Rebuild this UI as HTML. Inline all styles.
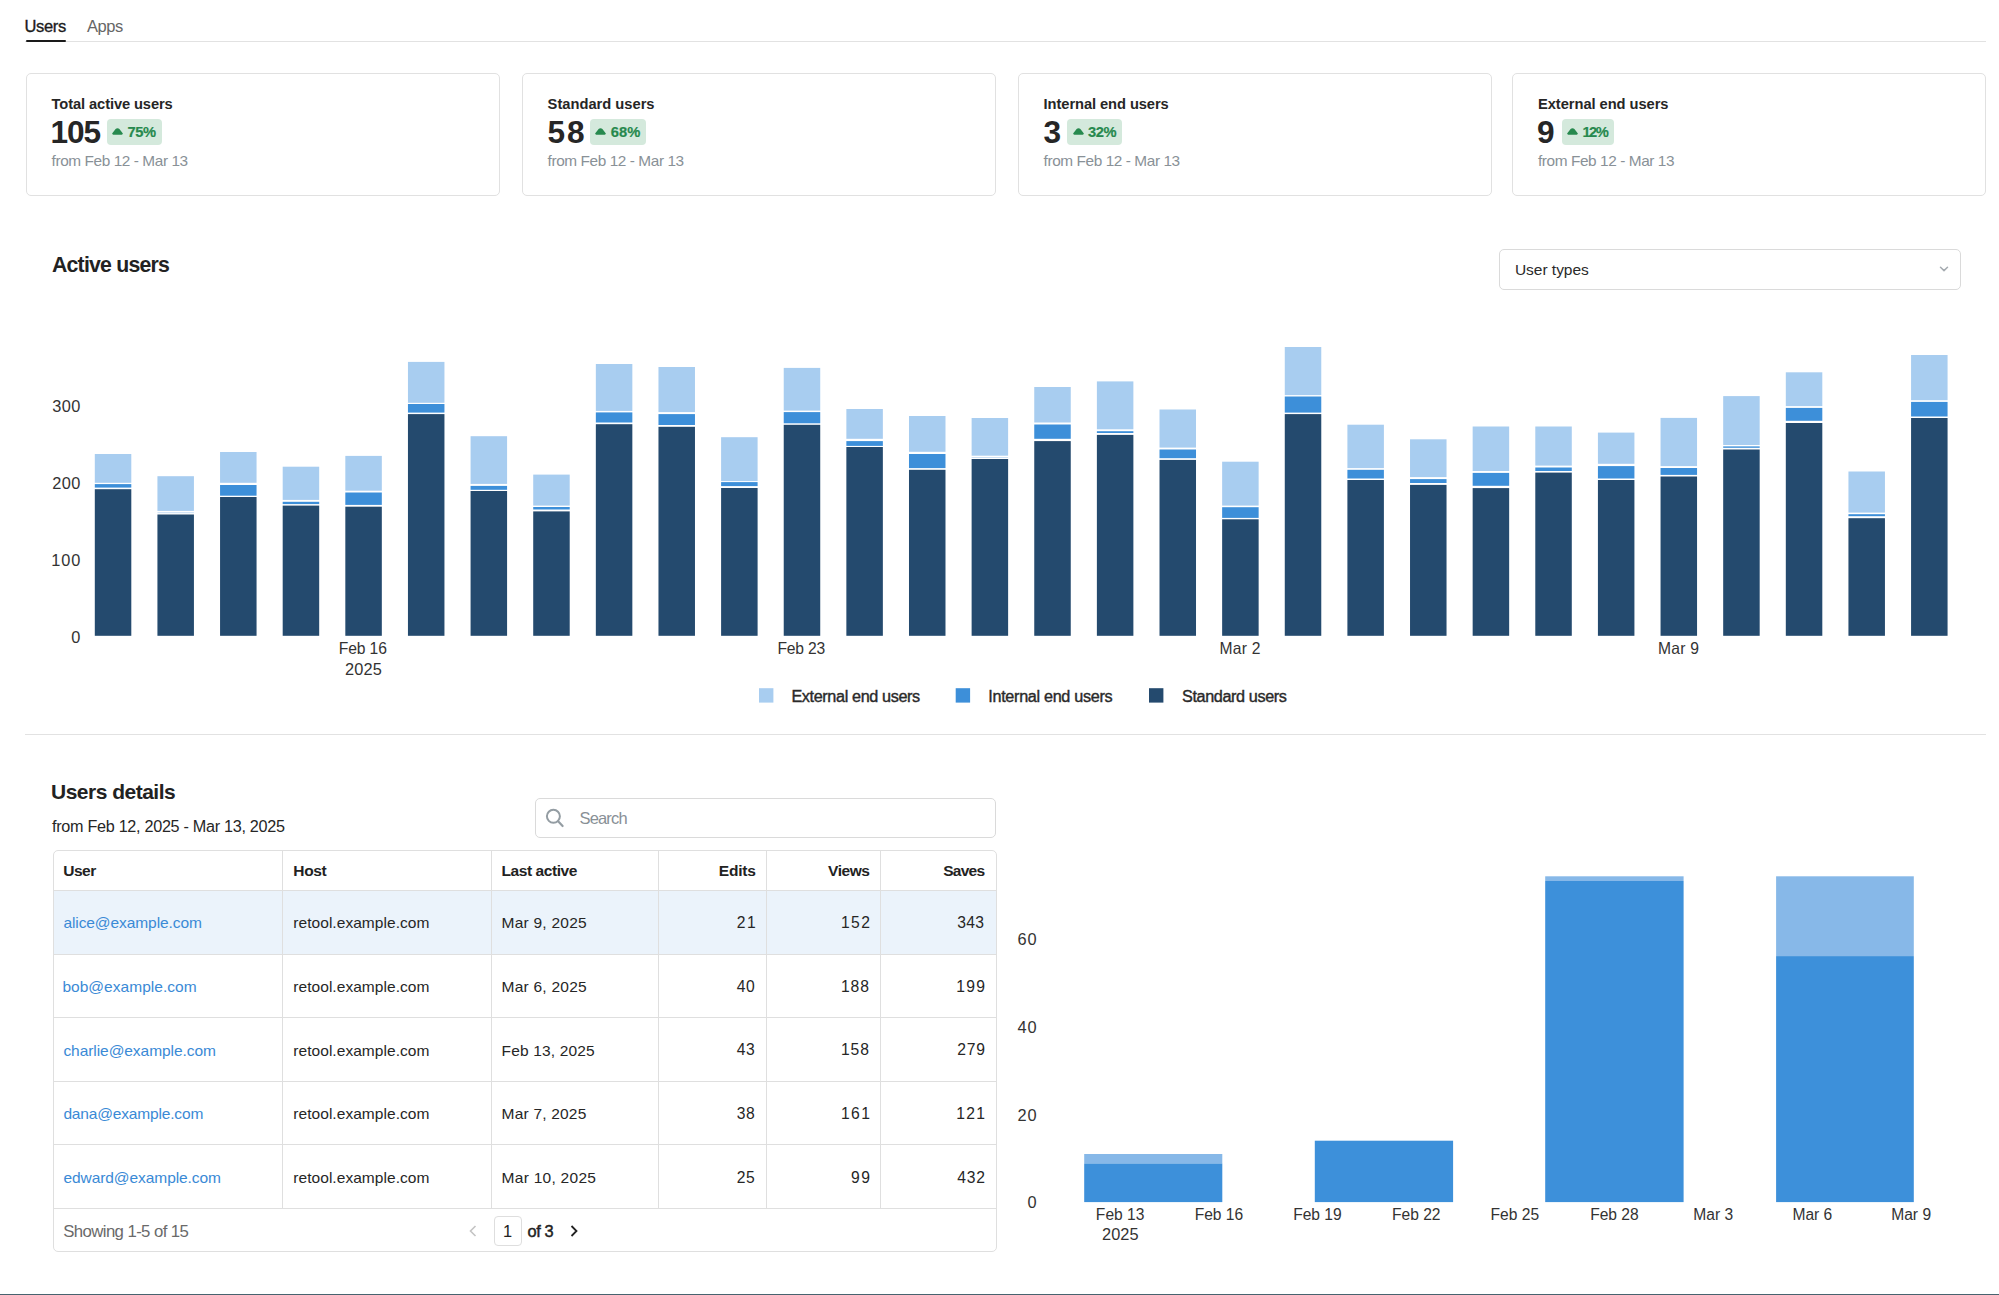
<!DOCTYPE html><html><head><meta charset="utf-8"><style>html,body{margin:0;padding:0;background:#fff;}
body{width:1999px;height:1295px;position:relative;overflow:hidden;font-family:"Liberation Sans", sans-serif;}
.t{position:absolute;line-height:1;white-space:nowrap;}
</style></head><body>
<div class="t" style="left:24.50px;top:18.23px;font-size:16.5px;font-weight:400;color:#1c1c1c;letter-spacing:-0.334px;-webkit-text-stroke:0.35px #1c1c1c;">Users</div>
<div class="t" style="left:87.00px;top:18.23px;font-size:16.5px;font-weight:400;color:#666;letter-spacing:-0.453px;">Apps</div>
<div style="position:absolute;left:25.00px;top:40.50px;width:1961.00px;height:1.10px;background:#e2e2e2"></div>
<div style="position:absolute;left:25.50px;top:39.60px;width:40.50px;height:2.40px;background:#1a1a1a;border-radius:1px"></div>
<div style="position:absolute;left:26.00px;top:72.50px;width:474.00px;height:123.30px;box-sizing:border-box;border:1px solid #e1e1e1;border-radius:5px;background:#fff"></div>
<div class="t" style="left:51.60px;top:96.56px;font-size:14.69px;font-weight:700;color:#262626;letter-spacing:-0.107px;">Total active users</div>
<div class="t" style="left:50.60px;top:117.44px;font-size:31.61px;font-weight:700;color:#262626;letter-spacing:-1.080px;">105</div>
<div style="position:absolute;left:106.60px;top:119.00px;width:55.00px;height:25.50px;background:#d4e9dc;border-radius:4px"></div>
<svg style="position:absolute;left:112.10px;top:127.3px" width="11" height="8" viewBox="0 0 11 8"><path d="M1.3 7.7 C0.2 7.7 -0.1 6.8 0.5 6.1 L3.6 2.1 C4.6 0.8 6.4 0.8 7.4 2.1 L10.5 6.1 C11.1 6.8 10.8 7.7 9.7 7.7 Z" fill="#27894e"/></svg>
<div class="t" style="left:127.40px;top:125.36px;font-size:14.69px;font-weight:700;color:#27894e;letter-spacing:-0.418px;-webkit-text-stroke:0.2px #27894e;">75%</div>
<div class="t" style="left:51.60px;top:153.48px;font-size:15.38px;font-weight:400;color:#899197;letter-spacing:-0.413px;">from Feb 12 - Mar 13</div>
<div style="position:absolute;left:522.00px;top:72.50px;width:474.00px;height:123.30px;box-sizing:border-box;border:1px solid #e1e1e1;border-radius:5px;background:#fff"></div>
<div class="t" style="left:547.60px;top:96.56px;font-size:14.69px;font-weight:700;color:#262626;">Standard users</div>
<div class="t" style="left:547.60px;top:117.44px;font-size:31.61px;font-weight:700;color:#262626;letter-spacing:1.720px;">58</div>
<div style="position:absolute;left:589.90px;top:119.00px;width:56.00px;height:25.50px;background:#d4e9dc;border-radius:4px"></div>
<svg style="position:absolute;left:595.40px;top:127.3px" width="11" height="8" viewBox="0 0 11 8"><path d="M1.3 7.7 C0.2 7.7 -0.1 6.8 0.5 6.1 L3.6 2.1 C4.6 0.8 6.4 0.8 7.4 2.1 L10.5 6.1 C11.1 6.8 10.8 7.7 9.7 7.7 Z" fill="#27894e"/></svg>
<div class="t" style="left:610.70px;top:125.36px;font-size:14.69px;font-weight:700;color:#27894e;letter-spacing:0.082px;-webkit-text-stroke:0.2px #27894e;">68%</div>
<div class="t" style="left:547.60px;top:153.48px;font-size:15.38px;font-weight:400;color:#899197;letter-spacing:-0.413px;">from Feb 12 - Mar 13</div>
<div style="position:absolute;left:1018.00px;top:72.50px;width:474.00px;height:123.30px;box-sizing:border-box;border:1px solid #e1e1e1;border-radius:5px;background:#fff"></div>
<div class="t" style="left:1043.60px;top:96.56px;font-size:14.69px;font-weight:700;color:#262626;letter-spacing:-0.079px;">Internal end users</div>
<div class="t" style="left:1043.60px;top:117.44px;font-size:31.61px;font-weight:700;color:#262626;">3</div>
<div style="position:absolute;left:1067.10px;top:119.00px;width:55.00px;height:25.50px;background:#d4e9dc;border-radius:4px"></div>
<svg style="position:absolute;left:1072.60px;top:127.3px" width="11" height="8" viewBox="0 0 11 8"><path d="M1.3 7.7 C0.2 7.7 -0.1 6.8 0.5 6.1 L3.6 2.1 C4.6 0.8 6.4 0.8 7.4 2.1 L10.5 6.1 C11.1 6.8 10.8 7.7 9.7 7.7 Z" fill="#27894e"/></svg>
<div class="t" style="left:1087.90px;top:125.36px;font-size:14.69px;font-weight:700;color:#27894e;letter-spacing:-0.418px;-webkit-text-stroke:0.2px #27894e;">32%</div>
<div class="t" style="left:1043.60px;top:153.48px;font-size:15.38px;font-weight:400;color:#899197;letter-spacing:-0.413px;">from Feb 12 - Mar 13</div>
<div style="position:absolute;left:1512.40px;top:72.50px;width:474.00px;height:123.30px;box-sizing:border-box;border:1px solid #e1e1e1;border-radius:5px;background:#fff"></div>
<div class="t" style="left:1538.00px;top:96.56px;font-size:14.69px;font-weight:700;color:#262626;letter-spacing:-0.056px;">External end users</div>
<div class="t" style="left:1537.00px;top:117.44px;font-size:31.61px;font-weight:700;color:#262626;">9</div>
<div style="position:absolute;left:1561.60px;top:119.00px;width:52.80px;height:25.50px;background:#d4e9dc;border-radius:4px"></div>
<svg style="position:absolute;left:1567.10px;top:127.3px" width="11" height="8" viewBox="0 0 11 8"><path d="M1.3 7.7 C0.2 7.7 -0.1 6.8 0.5 6.1 L3.6 2.1 C4.6 0.8 6.4 0.8 7.4 2.1 L10.5 6.1 C11.1 6.8 10.8 7.7 9.7 7.7 Z" fill="#27894e"/></svg>
<div class="t" style="left:1582.40px;top:125.36px;font-size:14.69px;font-weight:700;color:#27894e;letter-spacing:-1.518px;-webkit-text-stroke:0.2px #27894e;">12%</div>
<div class="t" style="left:1538.00px;top:153.48px;font-size:15.38px;font-weight:400;color:#899197;letter-spacing:-0.413px;">from Feb 12 - Mar 13</div>
<div class="t" style="left:52.00px;top:254.50px;font-size:21.26px;font-weight:700;color:#222;letter-spacing:-0.779px;">Active users</div>
<div style="position:absolute;left:1499.00px;top:249.00px;width:461.50px;height:40.50px;box-sizing:border-box;border:1px solid #dadada;border-radius:5px;background:#fff"></div>
<div class="t" style="left:1514.90px;top:261.96px;font-size:15.52px;font-weight:400;color:#2a2a2a;letter-spacing:-0.022px;">User types</div>
<svg style="position:absolute;left:1938px;top:265px" width="12" height="8" viewBox="0 0 12 8"><path d="M2.5 2.2 L6 5.6 L9.5 2.2" fill="none" stroke="#a5abb0" stroke-width="1.5" stroke-linecap="round" stroke-linejoin="round"/></svg>
<svg style="position:absolute;left:0;top:0" width="1999" height="1295"><rect x="94.80" y="454" width="36.5" height="28.80" fill="#a8cdf0"/><rect x="94.80" y="484.1" width="36.5" height="3.50" fill="#3d8fd9"/><rect x="94.80" y="489.2" width="36.5" height="146.60" fill="#244a6e"/><rect x="157.43" y="476.2" width="36.5" height="34.70" fill="#a8cdf0"/><rect x="157.43" y="512.2" width="36.5" height="1.00" fill="#c9def3"/><rect x="157.43" y="514.5" width="36.5" height="121.30" fill="#244a6e"/><rect x="220.06" y="452" width="36.5" height="30.80" fill="#a8cdf0"/><rect x="220.06" y="485" width="36.5" height="10.70" fill="#3d8fd9"/><rect x="220.06" y="497" width="36.5" height="138.80" fill="#244a6e"/><rect x="282.69" y="466.7" width="36.5" height="33.20" fill="#a8cdf0"/><rect x="282.69" y="501.8" width="36.5" height="2.30" fill="#3d8fd9"/><rect x="282.69" y="505.6" width="36.5" height="130.20" fill="#244a6e"/><rect x="345.32" y="455.9" width="36.5" height="34.80" fill="#a8cdf0"/><rect x="345.32" y="492.5" width="36.5" height="12.40" fill="#3d8fd9"/><rect x="345.32" y="506.7" width="36.5" height="129.10" fill="#244a6e"/><rect x="407.95" y="361.9" width="36.5" height="40.90" fill="#a8cdf0"/><rect x="407.95" y="404" width="36.5" height="8.60" fill="#3d8fd9"/><rect x="407.95" y="414.1" width="36.5" height="221.70" fill="#244a6e"/><rect x="470.58" y="436.2" width="36.5" height="47.70" fill="#a8cdf0"/><rect x="470.58" y="485.9" width="36.5" height="3.90" fill="#3d8fd9"/><rect x="470.58" y="491" width="36.5" height="144.80" fill="#244a6e"/><rect x="533.21" y="474.6" width="36.5" height="31.00" fill="#a8cdf0"/><rect x="533.21" y="507" width="36.5" height="2.50" fill="#3d8fd9"/><rect x="533.21" y="511.4" width="36.5" height="124.40" fill="#244a6e"/><rect x="595.84" y="364" width="36.5" height="46.90" fill="#a8cdf0"/><rect x="595.84" y="412.4" width="36.5" height="10.10" fill="#3d8fd9"/><rect x="595.84" y="424.2" width="36.5" height="211.60" fill="#244a6e"/><rect x="658.47" y="367" width="36.5" height="45.10" fill="#a8cdf0"/><rect x="658.47" y="414.1" width="36.5" height="10.90" fill="#3d8fd9"/><rect x="658.47" y="426.8" width="36.5" height="209.00" fill="#244a6e"/><rect x="721.10" y="437.2" width="36.5" height="43.90" fill="#a8cdf0"/><rect x="721.10" y="482.1" width="36.5" height="4.00" fill="#3d8fd9"/><rect x="721.10" y="488" width="36.5" height="147.80" fill="#244a6e"/><rect x="783.73" y="367.9" width="36.5" height="42.70" fill="#a8cdf0"/><rect x="783.73" y="412.1" width="36.5" height="11.20" fill="#3d8fd9"/><rect x="783.73" y="424.8" width="36.5" height="211.00" fill="#244a6e"/><rect x="846.36" y="409" width="36.5" height="29.80" fill="#a8cdf0"/><rect x="846.36" y="441.1" width="36.5" height="4.80" fill="#3d8fd9"/><rect x="846.36" y="447" width="36.5" height="188.80" fill="#244a6e"/><rect x="908.99" y="416" width="36.5" height="35.80" fill="#a8cdf0"/><rect x="908.99" y="454" width="36.5" height="14.10" fill="#3d8fd9"/><rect x="908.99" y="469.8" width="36.5" height="166.00" fill="#244a6e"/><rect x="971.62" y="418" width="36.5" height="37.70" fill="#a8cdf0"/><rect x="971.62" y="457.0" width="36.5" height="0.90" fill="#c9def3"/><rect x="971.62" y="459" width="36.5" height="176.80" fill="#244a6e"/><rect x="1034.25" y="387" width="36.5" height="35.50" fill="#a8cdf0"/><rect x="1034.25" y="424.5" width="36.5" height="14.30" fill="#3d8fd9"/><rect x="1034.25" y="441.1" width="36.5" height="194.70" fill="#244a6e"/><rect x="1096.88" y="381.4" width="36.5" height="47.90" fill="#a8cdf0"/><rect x="1096.88" y="431.2" width="36.5" height="1.80" fill="#3d8fd9"/><rect x="1096.88" y="434.9" width="36.5" height="200.90" fill="#244a6e"/><rect x="1159.51" y="409.5" width="36.5" height="38.10" fill="#a8cdf0"/><rect x="1159.51" y="449.5" width="36.5" height="8.70" fill="#3d8fd9"/><rect x="1159.51" y="459.9" width="36.5" height="175.90" fill="#244a6e"/><rect x="1222.14" y="461.7" width="36.5" height="43.90" fill="#a8cdf0"/><rect x="1222.14" y="507.2" width="36.5" height="10.70" fill="#3d8fd9"/><rect x="1222.14" y="519.3" width="36.5" height="116.50" fill="#244a6e"/><rect x="1284.77" y="347" width="36.5" height="48.10" fill="#a8cdf0"/><rect x="1284.77" y="396.5" width="36.5" height="16.10" fill="#3d8fd9"/><rect x="1284.77" y="414.1" width="36.5" height="221.70" fill="#244a6e"/><rect x="1347.40" y="424.7" width="36.5" height="43.40" fill="#a8cdf0"/><rect x="1347.40" y="469.8" width="36.5" height="8.70" fill="#3d8fd9"/><rect x="1347.40" y="480" width="36.5" height="155.80" fill="#244a6e"/><rect x="1410.03" y="439.3" width="36.5" height="37.80" fill="#a8cdf0"/><rect x="1410.03" y="479.1" width="36.5" height="3.90" fill="#3d8fd9"/><rect x="1410.03" y="484.9" width="36.5" height="150.90" fill="#244a6e"/><rect x="1472.66" y="426.5" width="36.5" height="44.50" fill="#a8cdf0"/><rect x="1472.66" y="472.9" width="36.5" height="12.90" fill="#3d8fd9"/><rect x="1472.66" y="488.1" width="36.5" height="147.70" fill="#244a6e"/><rect x="1535.29" y="426.5" width="36.5" height="39.10" fill="#a8cdf0"/><rect x="1535.29" y="467.5" width="36.5" height="3.50" fill="#3d8fd9"/><rect x="1535.29" y="472.6" width="36.5" height="163.20" fill="#244a6e"/><rect x="1597.92" y="432.6" width="36.5" height="31.20" fill="#a8cdf0"/><rect x="1597.92" y="466.1" width="36.5" height="12.40" fill="#3d8fd9"/><rect x="1597.92" y="480" width="36.5" height="155.80" fill="#244a6e"/><rect x="1660.55" y="417.9" width="36.5" height="48.20" fill="#a8cdf0"/><rect x="1660.55" y="468" width="36.5" height="6.90" fill="#3d8fd9"/><rect x="1660.55" y="476.5" width="36.5" height="159.30" fill="#244a6e"/><rect x="1723.18" y="396.1" width="36.5" height="48.90" fill="#a8cdf0"/><rect x="1723.18" y="446.4" width="36.5" height="1.40" fill="#3d8fd9"/><rect x="1723.18" y="449.5" width="36.5" height="186.30" fill="#244a6e"/><rect x="1785.81" y="372.3" width="36.5" height="33.80" fill="#a8cdf0"/><rect x="1785.81" y="407.9" width="36.5" height="12.90" fill="#3d8fd9"/><rect x="1785.81" y="423" width="36.5" height="212.80" fill="#244a6e"/><rect x="1848.44" y="471.5" width="36.5" height="41.10" fill="#a8cdf0"/><rect x="1848.44" y="514.2" width="36.5" height="2.00" fill="#3d8fd9"/><rect x="1848.44" y="518.2" width="36.5" height="117.60" fill="#244a6e"/><rect x="1911.07" y="355" width="36.5" height="45.20" fill="#a8cdf0"/><rect x="1911.07" y="401.9" width="36.5" height="14.60" fill="#3d8fd9"/><rect x="1911.07" y="418" width="36.5" height="217.80" fill="#244a6e"/><rect x="1084.2" y="1154" width="138.10" height="9.50" fill="#87b8e8"/><rect x="1084.2" y="1163.5" width="138.10" height="38.60" fill="#3d90da"/><rect x="1314.8" y="1140.7" width="138.30" height="61.40" fill="#3d90da"/><rect x="1545.2" y="876.3" width="138.40" height="4.70" fill="#87b8e8"/><rect x="1545.2" y="881" width="138.40" height="321.10" fill="#3d90da"/><rect x="1776.1" y="876.3" width="137.70" height="79.80" fill="#87b8e8"/><rect x="1776.1" y="956.1" width="137.70" height="246.00" fill="#3d90da"/><rect x="759" y="688.2" width="14.4" height="14.4" fill="#a8cdf0"/><rect x="955.7" y="688.2" width="14.4" height="14.4" fill="#3d8fd9"/><rect x="1149" y="688.2" width="14.4" height="14.4" fill="#244a6e"/></svg>
<div class="t" style="left:52.20px;top:398.30px;font-size:16.36px;font-weight:400;color:#333;letter-spacing:0.402px;">300</div>
<div class="t" style="left:52.20px;top:475.40px;font-size:16.36px;font-weight:400;color:#333;letter-spacing:0.402px;">200</div>
<div class="t" style="left:51.20px;top:552.00px;font-size:16.36px;font-weight:400;color:#333;letter-spacing:0.902px;">100</div>
<div class="t" style="left:71.20px;top:628.60px;font-size:16.36px;font-weight:400;color:#333;">0</div>
<div class="t" style="left:338.85px;top:641.14px;font-size:15.66px;font-weight:400;color:#333;letter-spacing:-0.147px;">Feb 16</div>
<div class="t" style="left:777.45px;top:641.14px;font-size:15.66px;font-weight:400;color:#333;letter-spacing:-0.187px;">Feb 23</div>
<div class="t" style="left:1219.60px;top:641.14px;font-size:15.66px;font-weight:400;color:#333;letter-spacing:0.222px;">Mar 2</div>
<div class="t" style="left:1658.00px;top:641.14px;font-size:15.66px;font-weight:400;color:#333;letter-spacing:0.222px;">Mar 9</div>
<div class="t" style="left:345.05px;top:660.75px;font-size:16.36px;font-weight:400;color:#333;letter-spacing:0.135px;">2025</div>
<div class="t" style="left:791.40px;top:688.47px;font-size:16.22px;font-weight:400;color:#2a2a2a;letter-spacing:-0.370px;-webkit-text-stroke:0.4px #2a2a2a;">External end users</div>
<div class="t" style="left:988.30px;top:688.47px;font-size:16.22px;font-weight:400;color:#2a2a2a;letter-spacing:-0.318px;-webkit-text-stroke:0.4px #2a2a2a;">Internal end users</div>
<div class="t" style="left:1182.00px;top:688.47px;font-size:16.22px;font-weight:400;color:#2a2a2a;letter-spacing:-0.383px;-webkit-text-stroke:0.4px #2a2a2a;">Standard users</div>
<div style="position:absolute;left:25.00px;top:734.00px;width:1961.00px;height:1.10px;background:#e2e2e2"></div>
<div class="t" style="left:51.00px;top:780.99px;font-size:20.98px;font-weight:700;color:#222;letter-spacing:-0.490px;">Users details</div>
<div class="t" style="left:52.00px;top:818.27px;font-size:16.22px;font-weight:400;color:#262626;letter-spacing:-0.299px;">from Feb 12, 2025 - Mar 13, 2025</div>
<div style="position:absolute;left:535.20px;top:797.60px;width:461.00px;height:40.50px;box-sizing:border-box;border:1px solid #dadada;border-radius:5px;background:#fff"></div>
<svg style="position:absolute;left:545px;top:807.6px" width="20" height="20" viewBox="0 0 20 20"><circle cx="8.4" cy="8.3" r="6.5" fill="none" stroke="#949da3" stroke-width="2"/><path d="M13.1 13.3 L17.6 18" stroke="#949da3" stroke-width="2.2" stroke-linecap="round"/></svg>
<div class="t" style="left:579.60px;top:810.13px;font-size:16.5px;font-weight:400;color:#889096;letter-spacing:-0.861px;">Search</div>
<div style="position:absolute;left:52.50px;top:849.50px;width:944.10px;height:402.50px;box-sizing:border-box;border:1px solid #dfdfdf;border-radius:5px;background:#fff"></div>
<div style="position:absolute;left:53.50px;top:890.30px;width:942.10px;height:63.70px;background:#ebf3fb"></div>
<div style="position:absolute;left:52.50px;top:889.80px;width:944.10px;height:1.00px;background:#dfdfdf"></div>
<div style="position:absolute;left:52.50px;top:953.50px;width:944.10px;height:1.00px;background:#dfdfdf"></div>
<div style="position:absolute;left:52.50px;top:1016.90px;width:944.10px;height:1.00px;background:#dfdfdf"></div>
<div style="position:absolute;left:52.50px;top:1080.50px;width:944.10px;height:1.00px;background:#dfdfdf"></div>
<div style="position:absolute;left:52.50px;top:1144.00px;width:944.10px;height:1.00px;background:#dfdfdf"></div>
<div style="position:absolute;left:52.50px;top:1208.30px;width:944.10px;height:1.00px;background:#dfdfdf"></div>
<div style="position:absolute;left:282.00px;top:849.50px;width:1.00px;height:359.30px;background:#dfdfdf"></div>
<div style="position:absolute;left:490.80px;top:849.50px;width:1.00px;height:359.30px;background:#dfdfdf"></div>
<div style="position:absolute;left:657.90px;top:849.50px;width:1.00px;height:359.30px;background:#dfdfdf"></div>
<div style="position:absolute;left:765.80px;top:849.50px;width:1.00px;height:359.30px;background:#dfdfdf"></div>
<div style="position:absolute;left:880.00px;top:849.50px;width:1.00px;height:359.30px;background:#dfdfdf"></div>
<div class="t" style="left:63.20px;top:863.46px;font-size:15.52px;font-weight:700;color:#222;letter-spacing:-0.488px;">User</div>
<div class="t" style="left:293.30px;top:863.46px;font-size:15.52px;font-weight:700;color:#222;letter-spacing:-0.371px;">Host</div>
<div class="t" style="left:501.50px;top:863.46px;font-size:15.52px;font-weight:700;color:#222;letter-spacing:-0.438px;">Last active</div>
<div class="t" style="left:718.80px;top:863.46px;font-size:15.52px;font-weight:700;color:#222;letter-spacing:-0.201px;">Edits</div>
<div class="t" style="left:828.10px;top:863.46px;font-size:15.52px;font-weight:700;color:#222;letter-spacing:-0.469px;">Views</div>
<div class="t" style="left:943.20px;top:863.46px;font-size:15.52px;font-weight:700;color:#222;letter-spacing:-0.759px;">Saves</div>
<div class="t" style="left:63.40px;top:915.36px;font-size:15.52px;font-weight:400;color:#3a8ad6;letter-spacing:-0.088px;">alice@example.com</div>
<div class="t" style="left:293.30px;top:915.36px;font-size:15.52px;font-weight:400;color:#262626;letter-spacing:0.043px;">retool.example.com</div>
<div class="t" style="left:501.60px;top:915.36px;font-size:15.52px;font-weight:400;color:#262626;letter-spacing:0.223px;">Mar 9, 2025</div>
<div class="t" style="left:736.70px;top:915.24px;font-size:15.66px;font-weight:400;color:#262626;letter-spacing:1.593px;">21</div>
<div class="t" style="left:840.90px;top:915.24px;font-size:15.66px;font-weight:400;color:#262626;letter-spacing:1.443px;">152</div>
<div class="t" style="left:957.20px;top:915.24px;font-size:15.66px;font-weight:400;color:#262626;letter-spacing:0.293px;">343</div>
<div class="t" style="left:62.40px;top:978.98px;font-size:15.52px;font-weight:400;color:#3a8ad6;letter-spacing:0.023px;">bob@example.com</div>
<div class="t" style="left:293.30px;top:978.98px;font-size:15.52px;font-weight:400;color:#262626;letter-spacing:0.043px;">retool.example.com</div>
<div class="t" style="left:501.60px;top:978.98px;font-size:15.52px;font-weight:400;color:#262626;letter-spacing:0.223px;">Mar 6, 2025</div>
<div class="t" style="left:736.70px;top:978.86px;font-size:15.66px;font-weight:400;color:#262626;letter-spacing:0.593px;">40</div>
<div class="t" style="left:840.90px;top:978.86px;font-size:15.66px;font-weight:400;color:#262626;letter-spacing:0.943px;">188</div>
<div class="t" style="left:956.20px;top:978.86px;font-size:15.66px;font-weight:400;color:#262626;letter-spacing:1.293px;">199</div>
<div class="t" style="left:63.40px;top:1042.60px;font-size:15.52px;font-weight:400;color:#3a8ad6;letter-spacing:-0.067px;">charlie@example.com</div>
<div class="t" style="left:293.30px;top:1042.60px;font-size:15.52px;font-weight:400;color:#262626;letter-spacing:0.043px;">retool.example.com</div>
<div class="t" style="left:501.60px;top:1042.60px;font-size:15.52px;font-weight:400;color:#262626;letter-spacing:0.153px;">Feb 13, 2025</div>
<div class="t" style="left:736.70px;top:1042.48px;font-size:15.66px;font-weight:400;color:#262626;letter-spacing:0.593px;">43</div>
<div class="t" style="left:840.90px;top:1042.48px;font-size:15.66px;font-weight:400;color:#262626;letter-spacing:0.943px;">158</div>
<div class="t" style="left:957.20px;top:1042.48px;font-size:15.66px;font-weight:400;color:#262626;letter-spacing:0.793px;">279</div>
<div class="t" style="left:63.40px;top:1106.22px;font-size:15.52px;font-weight:400;color:#3a8ad6;letter-spacing:-0.174px;">dana@example.com</div>
<div class="t" style="left:293.30px;top:1106.22px;font-size:15.52px;font-weight:400;color:#262626;letter-spacing:0.043px;">retool.example.com</div>
<div class="t" style="left:501.60px;top:1106.22px;font-size:15.52px;font-weight:400;color:#262626;letter-spacing:0.193px;">Mar 7, 2025</div>
<div class="t" style="left:736.70px;top:1106.10px;font-size:15.66px;font-weight:400;color:#262626;letter-spacing:0.593px;">38</div>
<div class="t" style="left:840.90px;top:1106.10px;font-size:15.66px;font-weight:400;color:#262626;letter-spacing:1.443px;">161</div>
<div class="t" style="left:956.20px;top:1106.10px;font-size:15.66px;font-weight:400;color:#262626;letter-spacing:1.293px;">121</div>
<div class="t" style="left:63.40px;top:1169.84px;font-size:15.52px;font-weight:400;color:#3a8ad6;letter-spacing:-0.075px;">edward@example.com</div>
<div class="t" style="left:293.30px;top:1169.84px;font-size:15.52px;font-weight:400;color:#262626;letter-spacing:0.043px;">retool.example.com</div>
<div class="t" style="left:501.60px;top:1169.84px;font-size:15.52px;font-weight:400;color:#262626;letter-spacing:0.264px;">Mar 10, 2025</div>
<div class="t" style="left:736.70px;top:1169.72px;font-size:15.66px;font-weight:400;color:#262626;letter-spacing:0.593px;">25</div>
<div class="t" style="left:851.00px;top:1169.72px;font-size:15.66px;font-weight:400;color:#262626;letter-spacing:1.493px;">99</div>
<div class="t" style="left:957.20px;top:1169.72px;font-size:15.66px;font-weight:400;color:#262626;letter-spacing:0.793px;">432</div>
<div class="t" style="left:63.20px;top:1223.90px;font-size:16.78px;font-weight:400;color:#6a6a6a;letter-spacing:-0.595px;">Showing 1-5 of 15</div>
<svg style="position:absolute;left:466px;top:1223px" width="14" height="16" viewBox="0 0 14 16"><path d="M9.5 3 L4.5 8 L9.5 13" fill="none" stroke="#c4c4c4" stroke-width="1.6"/></svg>
<div style="position:absolute;left:494.30px;top:1215.60px;width:27.30px;height:30.40px;box-sizing:border-box;border:1px solid #dedede;border-radius:4px;background:#fff"></div>
<div class="t" style="left:503.00px;top:1223.45px;font-size:16.36px;font-weight:400;color:#222;">1</div>
<div class="t" style="left:527.40px;top:1223.45px;font-size:16.36px;font-weight:400;color:#222;letter-spacing:-0.363px;-webkit-text-stroke:0.45px #222;">of 3</div>
<svg style="position:absolute;left:567px;top:1223px" width="14" height="16" viewBox="0 0 14 16"><path d="M4.5 3 L9.5 8 L4.5 13" fill="none" stroke="#222" stroke-width="1.8"/></svg>
<div class="t" style="left:1017.40px;top:930.70px;font-size:16.36px;font-weight:400;color:#333;letter-spacing:0.902px;">60</div>
<div class="t" style="left:1017.40px;top:1018.70px;font-size:16.36px;font-weight:400;color:#333;letter-spacing:0.902px;">40</div>
<div class="t" style="left:1017.40px;top:1107.00px;font-size:16.36px;font-weight:400;color:#333;letter-spacing:0.902px;">20</div>
<div class="t" style="left:1027.40px;top:1194.10px;font-size:16.36px;font-weight:400;color:#333;">0</div>
<div class="t" style="left:1095.86px;top:1206.69px;font-size:15.6px;font-weight:400;color:#333;">Feb 13</div>
<div class="t" style="left:1194.66px;top:1206.69px;font-size:15.6px;font-weight:400;color:#333;">Feb 16</div>
<div class="t" style="left:1293.16px;top:1206.69px;font-size:15.6px;font-weight:400;color:#333;">Feb 19</div>
<div class="t" style="left:1391.96px;top:1206.69px;font-size:15.6px;font-weight:400;color:#333;">Feb 22</div>
<div class="t" style="left:1490.56px;top:1206.69px;font-size:15.6px;font-weight:400;color:#333;">Feb 25</div>
<div class="t" style="left:1590.16px;top:1206.69px;font-size:15.6px;font-weight:400;color:#333;">Feb 28</div>
<div class="t" style="left:1693.31px;top:1206.69px;font-size:15.6px;font-weight:400;color:#333;">Mar 3</div>
<div class="t" style="left:1792.41px;top:1206.69px;font-size:15.6px;font-weight:400;color:#333;">Mar 6</div>
<div class="t" style="left:1891.21px;top:1206.69px;font-size:15.6px;font-weight:400;color:#333;">Mar 9</div>
<div class="t" style="left:1102.00px;top:1225.65px;font-size:16.36px;font-weight:400;color:#333;letter-spacing:0.035px;">2025</div>
<div style="position:absolute;left:0.00px;top:1294.00px;width:1999.00px;height:1.00px;background:#48636f"></div>
</body></html>
